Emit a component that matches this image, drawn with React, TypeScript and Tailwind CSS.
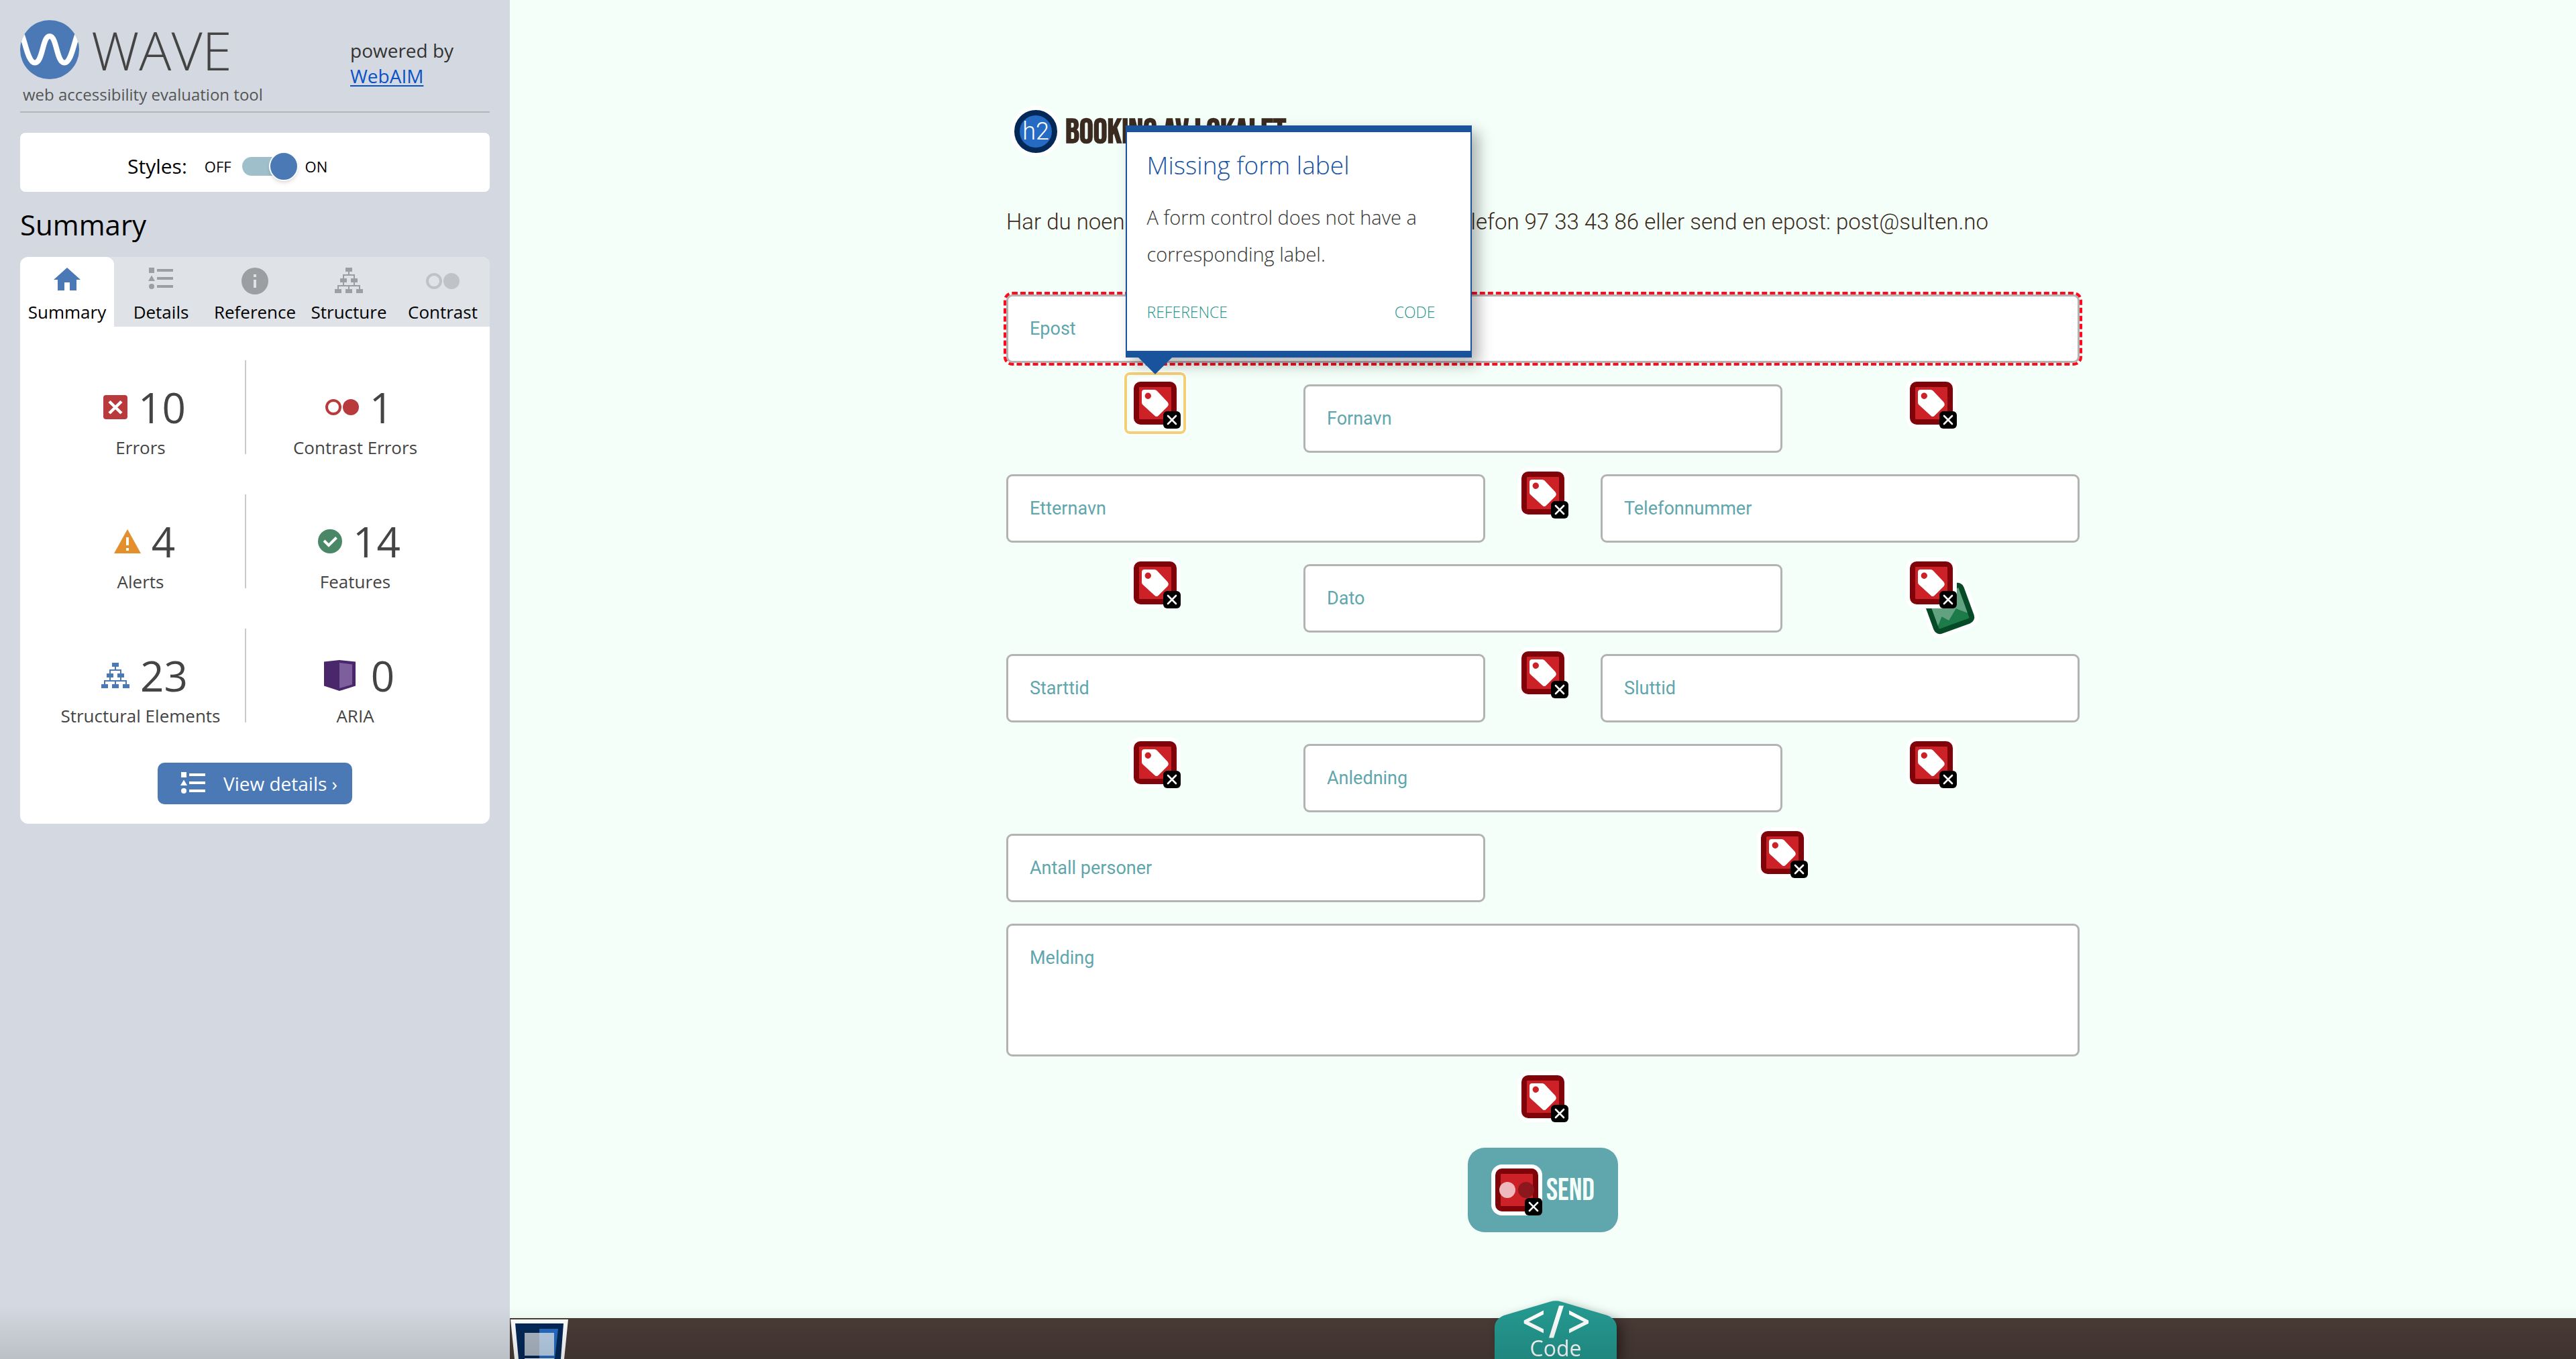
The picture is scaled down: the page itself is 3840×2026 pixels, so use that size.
import type { ReactNode } from "react";

function WaveLogo() {
  return (
    <svg viewBox="0 0 88 88" className="size-[88px] shrink-0" aria-hidden="true">
      <defs>
        <clipPath id="logo-disc">
          <circle cx="44" cy="44" r="44" />
        </clipPath>
      </defs>
      <circle cx="44" cy="44" r="44" fill="#4b79b5" />
      <path
        d="M2 20 C8 34 12 63.500 22 63.500 C34 63.500 33 24 44 24 C55 24 54 63.500 66 63.500 C76 63.500 80 34 86 20"
        fill="none"
        stroke="#fff"
        strokeWidth="8"
        clipPath="url(#logo-disc)"
      />
    </svg>
  );
}

function HomeIcon() {
  return (
    <svg viewBox="0 0 40 40" className="size-10" fill="currentColor" aria-hidden="true">
      <path d="M20 0 40 18H34V34H24V22H16V34H6V18H0Z" />
    </svg>
  );
}

function ListIcon() {
  return (
    <svg viewBox="0 0 38 34" className="h-[34px] w-[38px]" fill="currentColor" aria-hidden="true">
      <path d="M1 0h8v8H1ZM5 11.500 10 20H0ZM13 2h24v4H13ZM13 14h24v4H13ZM13 26h24v4H13Z" />
      <circle cx="5" cy="28" r="4" />
    </svg>
  );
}

function InfoIcon() {
  return (
    <svg viewBox="0 0 40 40" className="size-10" fill="currentColor" fillRule="evenodd" aria-hidden="true">
      <path d="M20 0a20 20 0 1 1 0 40a20 20 0 1 1 0-40ZM18 10v4h4v-4ZM18 18v12h4V18Z" />
    </svg>
  );
}

function StructureIcon() {
  return (
    <svg viewBox="0 0 42 38" className="h-[38px] w-[42px]" fill="currentColor" aria-hidden="true">
      <path d="M16 0h10v6H16ZM8 16h10v6H8ZM24 16h10v6H24ZM0 32h10v6H0ZM16 32h10v6H16ZM32 32h10v6H32Z" />
      <path
        d="M21 5V11M13 17V11H29V17M13 21V27M29 21V27M5 33V27H37V33M21 27V33"
        fill="none"
        stroke="currentColor"
        strokeWidth="2"
      />
    </svg>
  );
}

function ContrastIcon() {
  return (
    <svg viewBox="0 0 50 24" className="h-6 w-[50px]" fill="currentColor" aria-hidden="true">
      <circle cx="12" cy="12" r="10" fill="none" stroke="currentColor" strokeWidth="4" />
      <circle cx="38" cy="12" r="12" />
    </svg>
  );
}

function ErrorIcon() {
  return (
    <svg viewBox="0 0 36 36" className="size-9" aria-hidden="true">
      <rect width="36" height="36" rx="4" fill="#b93a3d" />
      <path d="M9 9.500 27 27M27 9.500 9 27" stroke="#fff" strokeWidth="4.500" />
    </svg>
  );
}

function AlertIcon() {
  return (
    <svg viewBox="0 0 40 36" className="h-9 w-10" aria-hidden="true">
      <path d="M20 0 40 36H0Z" fill="#e28f2c" />
      <path d="M18 12h4v12h-4ZM18 28h4v4h-4Z" fill="#fff" />
    </svg>
  );
}

function FeatureIcon() {
  return (
    <svg viewBox="0 0 36 36" className="size-9" aria-hidden="true">
      <circle cx="18" cy="18" r="18" fill="#4a8767" />
      <path d="M9 17 16 24 27.500 12.500" fill="none" stroke="#fff" strokeWidth="4" />
    </svg>
  );
}

function AriaIcon() {
  return (
    <svg viewBox="0 0 54 46" className="h-[46px] w-[54px]" aria-hidden="true">
      <path d="M0 2.500 23 0 47 2.500V38.500L23 46 0 38.500Z" fill="#4a266a" />
      <path d="M23 4 42 6.500V36.500L23 42Z" fill="#7e5f9d" />
    </svg>
  );
}

const TABS: { label: string; icon: ReactNode; tone: string }[] = [
  { label: "Summary", icon: <HomeIcon />, tone: "text-[#4b79b5]" },
  { label: "Details", icon: <ListIcon />, tone: "text-[#9c9fa2]" },
  { label: "Reference", icon: <InfoIcon />, tone: "text-[#9c9fa2]" },
  { label: "Structure", icon: <StructureIcon />, tone: "text-[#9c9fa2]" },
  { label: "Contrast", icon: <ContrastIcon />, tone: "text-[#bfc3c8] items-center" },
];

const COUNTS: { label: string; count: number; icon: ReactNode; tone: string }[] = [
  { label: "Errors", count: 10, icon: <ErrorIcon />, tone: "" },
  { label: "Contrast Errors", count: 1, icon: <ContrastIcon />, tone: "text-[#b93a3d]" },
  { label: "Alerts", count: 4, icon: <AlertIcon />, tone: "" },
  { label: "Features", count: 14, icon: <FeatureIcon />, tone: "" },
  { label: "Structural Elements", count: 23, icon: <StructureIcon />, tone: "text-[#4b79b5]" },
  { label: "ARIA", count: 0, icon: <AriaIcon />, tone: "" },
];

function Sidebar() {
  return (
    <aside className="w-[760px] shrink-0 bg-[#d4d9e1] px-[30px] pt-[30px] font-['Open_Sans',sans-serif] text-black">
      <header className="flex justify-between border-b-2 border-[#b0b6ba] pb-[9px]">
        <div>
          <div className="flex gap-[18px]">
            <WaveLogo />
            <h1 className="text-[80px] leading-[88px] font-light text-[#444]">WAVE</h1>
          </div>
          <p className="mt-[7px] pl-1 text-2xl leading-8 text-[#555]">web accessibility evaluation tool</p>
        </div>
        <p className="w-52 pt-[26px] text-[28px] leading-[38px] text-[#333]">
          powered by
          <br />
          <a href="#webaim" className="text-[#0a53c6] underline underline-offset-3">
            WebAIM
          </a>
        </p>
      </header>

      <div className="mt-[30px] flex h-[88px] items-center rounded-lg bg-white pt-3 pl-40">
        <label htmlFor="styles" className="mr-[26px] text-[30px] leading-10">
          Styles:
        </label>
        <div className="flex items-center text-[22px]">
          <span>OFF</span>
          <input
            id="styles"
            type="checkbox"
            role="switch"
            defaultChecked
            className="mr-2.5 ml-4 flex h-7 w-[84px] appearance-none items-center justify-start rounded-full bg-[#9fbfca] before:size-11 before:shrink-0 before:rounded-full before:border-2 before:border-white before:bg-[#4b79b5] before:shadow-md before:content-[''] checked:justify-end"
          />
          <span>ON</span>
        </div>
      </div>

      <h2 className="mt-[21px] mb-5 text-[42px] leading-[56px]">Summary</h2>

      <section className="overflow-hidden rounded-xl bg-white pb-[29px]">
        <div role="tablist" className="grid grid-cols-5 bg-[#dfe3e8]">
          {TABS.map((tab, i) => (
            <button
              key={tab.label}
              type="button"
              role="tab"
              aria-selected={i === 0}
              className="flex flex-col items-center pt-4 pb-1 text-[26px] leading-9 aria-selected:rounded-t-xl aria-selected:bg-white"
            >
              <span className={`mb-2 flex h-10 ${tab.tone}`}>{tab.icon}</span>
              {tab.label}
            </button>
          ))}
        </div>

        <ul className="grid grid-cols-[313fr_325fr] gap-y-[60px] pt-[50px] pr-[38px] pl-6 text-[#444]">
          {COUNTS.map((item) => (
            <li
              key={item.label}
              className="flex flex-col items-center border-[#c8cacc] pt-[30px] odd:border-r-2"
            >
              <span className={`flex h-20 items-center gap-4 pl-3 ${item.tone}`}>
                {item.icon}
                <span className="text-[62px] leading-[80px] text-[#444]">{item.count}</span>
              </span>
              <span className="mt-2.5 text-[26px] leading-5">{item.label}</span>
            </li>
          ))}
        </ul>

        <button
          type="button"
          className="mx-auto mt-[60px] flex h-[62px] w-[290px] items-center rounded-[10px] bg-[#4b79b5] pl-[34px] text-[28px] text-white"
        >
          <ListIcon />
          <span className="ml-[26px]">View details ›</span>
        </button>
      </section>
    </aside>
  );
}

function DismissBadge() {
  return (
    <>
      <rect x="44" y="44" width="26" height="26" rx="6" fill="#000" />
      <path d="M51 51 63 63M63 51 51 63" stroke="#fff" strokeWidth="2.600" strokeLinecap="round" />
    </>
  );
}

function MarkerFrame() {
  return (
    <>
      <rect x="-6" y="-6" width="76" height="76" rx="16" fill="#fff" />
      <rect width="64" height="64" rx="10" fill="#80030a" />
      <rect x="8" y="8" width="48" height="48" rx="1" fill="#cb2127" />
    </>
  );
}

function MissingLabelIcon({ withFeature = false }: { withFeature?: boolean }) {
  return (
    <svg viewBox="-6 -6 76 76" className="size-[76px] overflow-visible" aria-hidden="true">
      {withFeature && (
        <g transform="translate(58 70) rotate(-20)">
          <rect x="-38" y="-38" width="76" height="76" rx="16" fill="#fff" />
          <rect x="-32" y="-32" width="64" height="64" rx="10" fill="#064a28" />
          <rect x="-24" y="-24" width="48" height="48" rx="1" fill="#1d7a49" />
          <path d="M-24-24H24V16L10 4-6 17-14 8-24 19Z" fill="#62a280" />
        </g>
      )}
      <MarkerFrame />
      <path
        fillRule="evenodd"
        fill="#fff"
        d="M16 12H31Q33 12 34.500 13.500L50.500 30.500Q53 34 50.500 37L37 50.500Q34 53.500 31 50.500L13.500 34.500Q12 33 12 31V16Q12 12 16 12ZM21.300 16.600a4.700 4.700 0 1 0 0 9.400a4.700 4.700 0 1 0 0-9.400Z"
      />
      <DismissBadge />
    </svg>
  );
}

function Marker({ children, withFeature = false }: { children?: ReactNode; withFeature?: boolean }) {
  return (
    <div className="relative -mt-2.5 flex size-[76px] shrink-0">
      <button type="button" aria-label="Missing form label">
        <MissingLabelIcon withFeature={withFeature} />
      </button>
      {children}
    </div>
  );
}

function Popover() {
  return (
    <>
      <span className="pointer-events-none absolute -inset-2 rounded-lg border-4 border-[#f5cf75] outline-2 outline-white" />
      <div
        role="dialog"
        aria-labelledby="issue-title"
        className="absolute bottom-[106px] -left-1.5 z-10 w-[516px] border-x-2 border-y-10 border-[#19539e] bg-white pt-6 pr-[52px] pb-[43px] pl-[30px] font-['Open_Sans',sans-serif] font-light shadow-[10px_10px_20px_rgba(0,0,0,0.3)]"
      >
        <h3 id="issue-title" className="text-[37px] leading-[50px] text-[#19539e]">
          Missing form label
        </h3>
        <p className="mt-[25px] text-[29px] leading-[55px] text-[#333]">
          A form control does not have a corresponding label.
        </p>
        <div className="mt-11 flex justify-between text-[23px] leading-[30px] text-[#23958c]">
          <button type="button">REFERENCE</button>
          <button type="button">CODE</button>
        </div>
        <svg viewBox="0 0 52 26" className="absolute top-full left-4 mt-[9px] h-[26px] w-[52px]" aria-hidden="true">
          <path d="M0 0H52L26 26Z" fill="#19539e" />
        </svg>
      </div>
    </>
  );
}

const FIELD =
  "w-full rounded-[9px] border-3 border-[#b3b3b3] bg-white px-8 text-[27px] leading-[30px] text-[#5fa6ad] placeholder:text-[#5fa6ad] placeholder:opacity-100";

function Field({ label, type = "text" }: { label: string; type?: string }) {
  return <input type={type} aria-label={label} placeholder={label} className={`${FIELD} h-[102px]`} />;
}

function CentreRow({ label, withFeature = false, popover }: { label: string; withFeature?: boolean; popover?: ReactNode }) {
  return (
    <div className="grid h-[102px] grid-cols-[1fr_714px_1fr] justify-items-center">
      <Marker>{popover}</Marker>
      <Field label={label} />
      <Marker withFeature={withFeature} />
    </div>
  );
}

function SideRow({ left, right }: { left: string; right: string }) {
  return (
    <div className="grid h-[102px] grid-cols-[714px_1fr_714px] justify-items-center">
      <Field label={left} />
      <Marker />
      <Field label={right} />
    </div>
  );
}

function BookingForm() {
  return (
    <form className="mt-[84px] flex flex-col gap-8">
      <input
        type="email"
        aria-label="Epost"
        placeholder="Epost"
        className={`${FIELD} h-[102px] outline-4 outline-[#ff0a1e] outline-dashed`}
      />
      <CentreRow label="Fornavn" popover={<Popover />} />
      <SideRow left="Etternavn" right="Telefonnummer" />
      <CentreRow label="Dato" withFeature />
      <SideRow left="Starttid" right="Sluttid" />
      <CentreRow label="Anledning" />
      <div className="grid h-[102px] grid-cols-[714px_1fr] justify-items-center">
        <Field label="Antall personer" />
        <Marker />
      </div>
      <textarea
        aria-label="Melding"
        placeholder="Melding"
        className={`${FIELD} h-[198px] resize-none pt-[33px]`}
      />
      <div className="flex flex-col items-center">
        <Marker />
        <button
          type="submit"
          className="mt-[38px] flex h-[126px] items-center gap-1.5 rounded-[25px] bg-[#60a6ad] px-[35px] font-['Bebas_Neue','Roboto_Condensed',sans-serif] text-[46px] leading-none text-[#f4fff9]"
        >
          <svg viewBox="-6 -6 76 76" className="size-[76px]" aria-hidden="true">
            <MarkerFrame />
            <circle cx="18" cy="32" r="12" fill="#edb9bc" />
            <circle cx="46" cy="32" r="12" fill="#8c171c" />
            <DismissBadge />
          </svg>
          <span className="pt-1">SEND</span>
        </button>
      </div>
    </form>
  );
}

function FooterBar() {
  return (
    <footer className="relative mt-32 min-h-[61px] grow bg-[#493b36]">
      <svg viewBox="0 0 86 59" className="absolute bottom-0 left-px h-[59px] w-[86px]" aria-hidden="true">
        <path d="M0 0H86L80 59H6Z" fill="#fff" />
        <path d="M7 6H79L75 59H12Z" fill="#042858" />
        <path d="M43 14H71L66 59H43Z" fill="#256bc4" />
        <path d="M21 20H43V54H21Z" fill="#acb7c5" />
        <path d="M43 20H65V54H43Z" fill="#b9cfe8" />
        <path d="M21 58H65V59H21Z" fill="#fff" />
      </svg>
      <button
        type="button"
        className="absolute bottom-0 left-[calc(50%-72px)] flex h-[87px] w-[182px] items-end justify-center drop-shadow-[8px_6px_8px_rgba(0,0,0,0.4)]"
      >
        <svg viewBox="0 0 182 87" className="absolute inset-0" aria-hidden="true">
          <path d="M0 40Q0 28 14 22L83 1.500Q91-1 99 1.500L168 22Q182 28 182 40V87H0Z" fill="#249990" />
          <path
            d="M73 14.500V20.500L51 31.500 73 42.500V48.500L43.700 34V29.500ZM111 14.500 140 29.500V34L111 48.500V42.500L133 31.500 111 20.500ZM96 7.500H103L88 55.500H81Z"
            fill="#fff"
          />
        </svg>
        <span className="relative font-['Open_Sans',sans-serif] text-[32px] leading-8 text-white">Code</span>
      </button>
    </footer>
  );
}

export default function App() {
  return (
    <div className="relative flex min-h-screen overflow-hidden bg-[#f4fff9]">
      <Sidebar />
      <main className="flex grow flex-col font-['Roboto',sans-serif] text-[#3a2a20]">
        <div className="mx-auto w-full max-w-[1600px] pt-[158px]">
          <h2 className="flex items-center gap-1.5 pl-1.5 font-['Bebas_Neue','Roboto_Condensed',sans-serif] text-[52px] leading-none font-bold">
            <span className="flex size-[76px] items-center justify-center rounded-full border-6 border-white bg-[#042858]">
              <span className="flex size-12 items-center justify-center rounded-full bg-[#256bc4] font-['Roboto',sans-serif] text-[36px] font-light text-white">
                h2
              </span>
            </span>
            <span className="pt-1">BOOKING AV LOKALET</span>
          </h2>
          <p className="mt-[73px] text-[33px] leading-[48px] font-light">
            Har du noen spørsmål? Kontakt oss gjerne på telefon 97 33 43 86 eller send en epost: post@sulten.no
          </p>
          <BookingForm />
        </div>
        <FooterBar />
      </main>
      <div className="pointer-events-none absolute inset-x-0 bottom-0 h-20 bg-linear-to-t from-black/12 to-transparent" />
    </div>
  );
}
